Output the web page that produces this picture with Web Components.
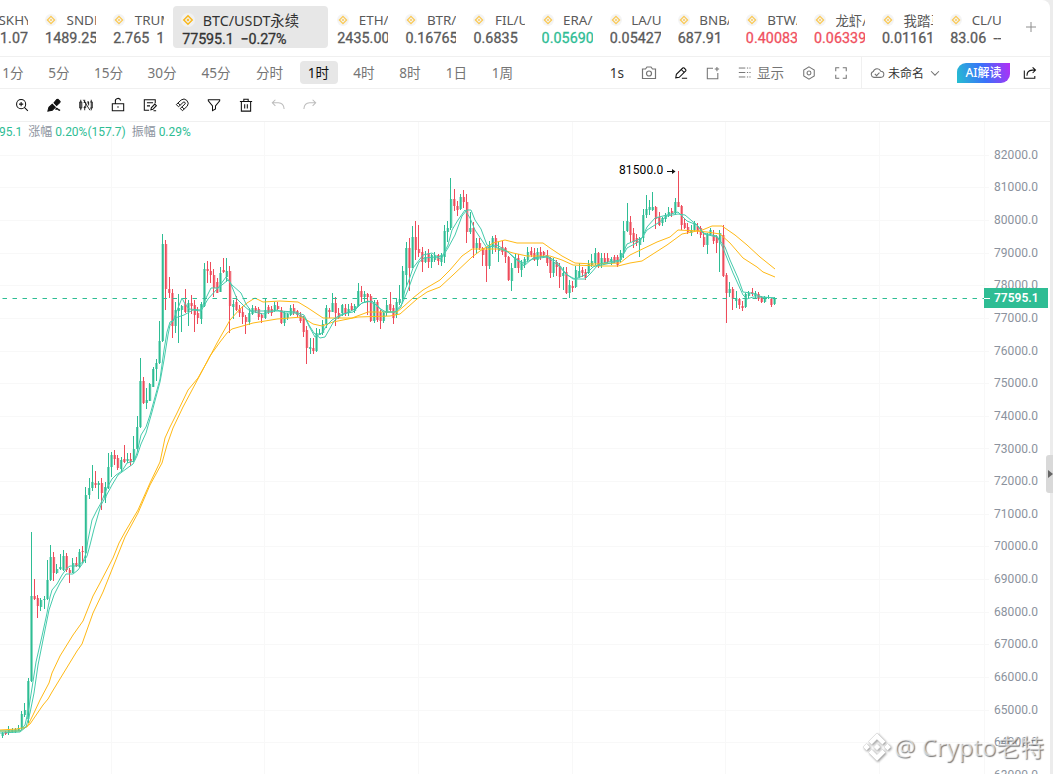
<!DOCTYPE html>
<html lang="zh">
<head>
<meta charset="utf-8">
<title>BTC/USDT</title>
<style>
  body {
    margin: 0;
    width: 1053px;
    height: 774px;
    overflow: hidden;
    background: #ececec;
    font-family: "Noto Sans", "Noto Sans CJK SC", sans-serif;
  }
</style>
</head>
<body>
<trade-app></trade-app>

<script>
class TickerItem extends HTMLElement {
  constructor() {
    super();
    this.attachShadow({ mode: 'open' });
  }

  connectedCallback() {
    this.shadowRoot.innerHTML = `
    <style>
      :host {
        display: block;
        flex: none;
        width: 51.1px;
        height: 42px;
        margin: 6px 17px 0 0;
        overflow: hidden;
        white-space: nowrap;
        color: #5a5a5a;
        font-size: 13.4px;
      }
      .name {
        display: flex;
        align-items: center;
        height: 17px;
        margin-top: 5px;
      }
      svg {
        flex: none;
        width: 12px;
        height: 12px;
        margin-right: 9.5px;
        opacity: .75;
      }
      .price {
        display: block;
        font: 400 14.3px/18px Roboto, "Noto Sans CJK SC", sans-serif;
        -webkit-text-stroke: .3px currentColor;
        height: 18px;
        margin-top: 1px;
        letter-spacing: .05px;
      }
      :host([up]) .price { color: #2ebd94; }
      :host([down]) .price { color: #f0505e; }
      :host([cut]) { margin-left: -23px; }
      :host([cut]) .price { text-align: right; }
      :host([active]) {
        box-sizing: border-box;
        width: 155px;
        margin: 6px 9px 0 -8px;
        padding: 0 9px;
        border-radius: 4px;
        background: #e7e7e7;
        color: #333;
        font-size: 14.3px;
      }
      :host([active]) svg { opacity: 1; width: 14px; height: 14px; margin: 0 7.5px 0 -1px; }
      :host([active]) .price { margin-top: 2px; letter-spacing: -.1px; }
    </style>
    <span class="name">
      <svg viewBox="0 0 14 14">
        <circle cx="7" cy="7" r="7" fill="#f1f1f1"/>
        <path d="M7 2.800 11.200 7 7 11.200 2.800 7Z" fill="none" stroke="#f9b81e" stroke-width="1.500"/>
        <path d="M7 5.500 8.500 7 7 8.500 5.500 7Z" fill="#f9b81e"/>
      </svg><slot></slot>
    </span>
    <span class="price"><slot name="price"></slot></span>`;
  }
}
customElements.define('ticker-item', TickerItem);

class TickerBar extends HTMLElement {
  constructor() {
    super();
    this.attachShadow({ mode: 'open' }).innerHTML = `
    <style>
      :host {
        display: flex;
        height: 56px;
        border-bottom: 1px solid #f0f0f0;
        overflow: hidden;
      }
      .add {
        flex: none;
        width: 12px;
        margin: 21px 0 0 7px;
      }
    </style>
    <slot></slot>
    <svg class="add" height="12" viewBox="0 0 12 12"><path d="M6 1v10M1 6h10" stroke="#8e8e8e"/></svg>`;
  }
}
customElements.define('ticker-bar', TickerBar);

const ICONS = {
  camera: '<path d="M1.5 4h3L6 2h4l1.500 2h3v9.500h-13z"/><circle cx="8" cy="8.500" r="2.500"/>',
  pencil: '<path d="M2 13.500l.7-4L10 2.300q.8-.6 1.600 0l1.800 1.800q.7.8 0 1.600L6 13l-4 .5zM8.300 4l3.500 3.500M9 14h6"/>',
  addbox: '<path d="M8 2.500H1.500v12h12V8M12.500 1v5M10 3.500h5"/>',
  list: '<path d="M1 2.500h8M1 8h8M1 13.500h8M11 2.500h1.500M14 2.500h1.500M11 8h1.500M14 8h1.500M11 13.500h1.500M14 13.500h1.500"/>',
  hexagon: '<path d="M8 1l6 3.500v7L8 15l-6-3.500v-7z"/><circle cx="8" cy="8" r="2.200"/>',
  full: '<path d="M2 6V2h4M10 2h4v4M14 10v4h-4M6 14H2v-4"/>',
  cloud: '<path d="M4.500 13a3.400 3.400 0 0 1-.7-6.600A4.500 4.500 0 0 1 12.300 6a3.500 3.500 0 0 1 0 7zM5.500 9l2 2 3.300-3.500"/>',
  chevron: '<path d="M3.500 6L8 10.500 12.500 6"/>',
  share: '<path d="M1.500 5v9h12v-2.500M4.500 11q0-6 6-6.300h3M11 1.500l3.300 3.200L11 8"/>',
  zoom: '<circle cx="7" cy="7" r="5.200"/><path d="M7 4.600v4.800M4.600 7h4.800M10.700 10.700l4 4"/>',
  brush: '<path d="M1 15l1.200-4.500L6 7l3.500 3.500L6 14z" fill="currentColor"/><path d="M8 5.500l3.200-3.700 1.300-.3 2.500 2.500-.3 1.200L11 8.500z" fill="currentColor"/><path d="M10 13.500q1-2.500 2-1t3 1.500" stroke-width="1.600"/>',
  candles: '<path d="M2 2v12M.8 4.500h2.400v7H.8zM6.500 2v3M6.500 9v5M5.300 5h2.400v6H5.300M14 2v12M12.800 4.500h2.400v7h-2.400M10.500 4v3M5 2l7.500 12M9.500 4.500H11v4" stroke-width="1"/>',
  lock: '<path d="M1.500 6.500h13v8h-13zM5 6.500V4a3 3 0 0 1 6-1"/><path d="M8 9.500v1.500"/>',
  note: '<path d="M14 6V2H1.500v12H7M4.500 5.500h7M4.500 9H8M9 13.500l.5-2.300L13.500 7l1.800 1.800-4 4.200zM12 14.500h3"/>',
  magnet: '<path d="M1.500 7.500L7 2.300a5 5 0 0 1 7 7L8.500 14.500 6 12l5.300-5a1.400 1.400 0 0 0-2-2L4 10zM3.500 5.700L6 8.200M8 10.200l2.500 2.500" stroke-width="1.100"/>',
  funnel: '<path d="M1.500 2h13v1.200L9.700 9v3.500L6.300 14.500V9L1.500 3.200z"/>',
  trash: '<path d="M1 4h14M5.500 4V1.500h5V4M2.700 4v11h10.600V4M6.500 7v5M9.500 7v5"/>',
  undo: '<path d="M5 2L1.500 5.500 5 9M1.500 5.500h7q6 .3 6.500 7"/>',
  redo: '<path d="M11 2l3.500 3.500L11 9M14.500 5.500h-7q-6 .3-6.500 7"/>',
};

class ToolIcon extends HTMLElement {
  constructor() {
    super();
    this.attachShadow({ mode: 'open' });
  }

  connectedCallback() {
    const size = this.getAttribute('size') || 14;
    this.shadowRoot.innerHTML = `
    <style>
      :host {
        display: inline-flex;
        justify-content: center;
        align-items: center;
        flex: none;
        color: #111;
      }
      :host([soft]) { color: #747474; }
      :host([off]) { color: #bdbdbd; }
      :host([cell]) { width: 32px; }
      svg { fill: none; stroke: currentColor; stroke-width: 1.2; overflow: visible; }
    </style>
    <svg width="${size}" height="${size}" viewBox="0 0 16 16">${ICONS[this.getAttribute('name')]}</svg>`;
  }
}
customElements.define('tool-icon', ToolIcon);

class IntervalTab extends HTMLElement {
  constructor() {
    super();
    this.attachShadow({ mode: 'open' });
  }

  connectedCallback() {
    this.shadowRoot.innerHTML = `
    <style>
      :host {
        display: flex;
        flex: none;
        justify-content: center;
        width: ${this.getAttribute('w')}px;
        color: #757575;
        font-size: 13.6px;
      }
      span { line-height: 23px; border-radius: 4px; text-align: center; }
      :host([active]) span { width: 38px; background: #e7e7e7; color: #111; }
    </style>
    <span><slot></slot></span>`;
  }
}
customElements.define('interval-tab', IntervalTab);

class ToolRow extends HTMLElement {
  constructor() {
    super();
    this.attachShadow({ mode: 'open' }).innerHTML = `
    <style>
      :host {
        display: flex;
        align-items: center;
        box-sizing: border-box;
        height: 32px;
        border-bottom: 1px solid #f0f0f0;
        overflow: hidden;
      }
      :host([draw]) { height: 33px; padding-left: 6px; }
    </style>
    <slot></slot>`;
  }
}
customElements.define('tool-row', ToolRow);

// one candle per entry: direction, high, low, body top, body bottom (y in px)
const CANDLES = `
g732,738,733,736 r731,735,732,734 g726,735,730,733 g728,733,730,732 g728,733,729,732 g725,731,728,731 g711,730,714,728 g703,717,710,715 g678,723,681,719
g532,682,596,681 r579,600,596,599 r595,618,598,606 g598,611,600,607 g596,609,599,600 g560,600,580,599 g545,581,557,580 r552,581,557,573 g564,574,569,573
g554,570,567,569 g550,571,556,570 r553,572,556,570 r568,583,570,573 g558,573,563,573 r557,567,563,566 g549,568,552,567 r546,563,551,552 g487,563,495,553
g478,499,488,495 g465,491,482,488 r471,488,483,485 g481,499,483,485 r478,510,483,493 g482,503,487,498 g453,489,467,488 g452,477,455,467 r450,465,455,459
r455,470,458,468 g457,472,460,469 r445,463,459,462 g453,463,459,461 r453,466,459,462 g436,462,449,460 g416,451,427,449 g358,428,381,427 r377,404,381,403
g388,409,400,403 g383,401,384,401 g367,387,369,387 g359,381,363,369 g321,364,341,363 g234,342,244,341 r240,310,244,289 r277,298,289,293 r289,338,293,326
g302,333,310,326 g294,343,308,311 g305,332,306,310 r289,313,304,312 g300,326,303,312 r295,314,303,306 r300,332,305,315 r307,324,313,318 g302,324,304,319
g263,307,269,306 r261,283,269,271 r262,283,271,275 r269,297,275,288 r278,293,282,293 g267,292,273,292 r258,273,270,272 g258,282,271,277 r266,333,271,306
g300,319,304,307 r296,311,302,310 r305,317,309,313 r306,324,312,317 r315,334,317,322 g308,325,313,322 g305,315,308,314 r306,313,308,311 r307,320,309,317
r313,323,315,318 g298,319,310,318 r305,314,307,312 r306,316,309,313 g302,312,305,311 r302,310,306,309 r307,324,310,323 g311,326,313,323 g313,320,314,318
g305,316,308,315 r304,315,308,313 r310,317,311,315 r312,323,315,321 r316,337,318,332 r326,364,330,348 g338,354,347,349 r338,354,348,351 g328,352,333,351
g329,335,333,335 g320,335,324,333 g305,328,308,324 r308,318,310,312 g293,312,303,312 r297,326,303,313 r308,319,313,318 g304,316,305,313 r304,316,308,313
g304,316,309,313 r303,311,306,310 g304,313,306,311 g283,307,291,306 r286,302,291,297 g291,303,294,297 r293,315,294,297 r294,322,296,321 g300,323,302,321
r300,322,302,320 r310,329,312,321 g312,323,313,321 g300,316,305,313 r292,312,304,310 r305,324,308,318 g299,318,302,315 g285,305,299,303 g266,302,271,298
g242,287,248,275 r238,291,248,268 g226,268,237,268 r221,260,237,250 r225,257,249,253 r247,272,252,262 g251,263,257,262 r249,268,253,262 g254,268,255,262
g252,262,256,260 r254,265,255,261 g253,266,255,262 g225,263,231,257 g221,242,228,232 g178,230,199,228 r189,211,199,206 r201,216,206,210 g194,210,197,209
r190,208,197,202 r194,243,202,232 g212,234,228,232 r222,258,228,248 g238,254,243,248 r238,250,243,248 r247,266,248,255 r247,282,250,266 g241,269,246,266
g236,254,238,247 r235,252,238,247 g242,262,248,251 r241,255,247,252 r247,263,248,257 r256,281,257,280 g263,291,268,281 g254,268,258,268 r254,273,258,268
g260,277,263,270 g257,268,259,265 g247,261,252,260 r247,257,251,255 r248,261,253,260 g248,266,252,260 r247,260,252,257 r251,257,252,255 r250,266,255,263
r257,278,258,273 g258,277,262,273 r260,276,262,267 r263,288,266,277 g267,290,273,276 r267,294,272,293 g280,298,285,293 r281,292,286,288 g266,288,270,287
g263,278,271,277 r267,277,270,273 r269,280,272,278 g260,274,264,273 g254,267,261,265 g248,265,253,263 r252,268,253,265 g253,268,258,264 r253,263,258,262
r253,264,258,262 g257,265,259,262 r255,263,257,262 r255,267,257,265 g250,262,253,260 g221,258,231,252 g203,232,221,231 r216,242,222,235 r228,248,233,242
r234,246,238,243 g237,257,238,245 g209,242,215,238 g195,218,209,215 g200,215,207,210 g192,211,207,210 r206,229,207,219 r212,226,217,225 g217,226,218,223
g213,222,215,219 g207,217,212,215 r208,217,211,214 g198,215,202,213 r171,207,202,207 r205,230,206,225 r219,229,223,228 r223,234,227,232 g225,236,230,233
g221,232,223,230 r223,234,226,231 r226,238,228,235 r232,247,237,245 g233,254,235,245 g228,236,230,234 r230,244,235,241 r235,253,237,243 g230,272,233,242
r225,277,235,276 r273,323,275,293 g282,297,289,293 r287,310,289,299 g291,308,298,301 r298,309,299,305 r301,311,306,308 g293,308,294,307 g291,298,293,296
r288,296,292,294 g291,298,293,296 r292,301,294,299 r296,303,297,302 g296,303,297,302 g295,299,297,298 r298,307,299,305 g297,305,298,304
`.trim().split(/\s+/);

const AVERAGES = [
  ['#ffb915', '0,730 17,729 27,727 33,715 40,700 49,683 52,673 60,656 73,635 83,621 93,596 100,583 113,558 119,543 125,532 138,510 150,483 160,462 165,438 170,427 177,413 188,390 198,378 207,362 217,343 230,320 240,309 247,303 255,298 263,302 280,301 298,302 308,308 323,318 352,318 368,312 397,312 403,307 413,298 423,290 440,280 450,270 462,256 472,249 500,249 513,253 527,256 550,256 562,260 573,265 600,266 618,266 630,263 642,261 667,245 682,234 697,231 707,232 720,234 730,243 743,258 757,267 763,272 775,277'],
  ['#ffb915', '0,731 20,731 30,724 43,705 48,699 52,692 77,651 82,644 93,613 103,592 117,557 125,537 138,513 150,485 162,463 167,445 173,428 183,407 200,375 210,356 220,342 227,333 232,329 253,323 277,319 302,317 313,324 322,326 333,322 358,317 390,316 400,314 417,299 427,292 440,287 453,275 472,257 480,251 493,243 505,240 517,243 543,243 550,248 562,256 575,263 593,264 620,263 630,255 657,242 670,237 678,230 700,231 712,226 722,226 735,235 747,245 760,257 775,269'],
  ['#45cbac', '0,731 20,731 25,725 29,707 32,688 36,662 42,636 47,613 50,597 52,590 57,584 62,575 67,568 70,566 77,566 83,562 86,553 88,540 92,520 97,510 101,503 107,488 112,479 116,475 122,471 127,463 134,461 137,453 141,435 146,427 150,415 155,397 160,379 164,350 167,332 170,322 173,321 176,313 182,298 185,304 189,309 201,310 205,300 211,288 218,288 226,277 230,282 237,299 244,306 250,311 263,314 277,310 285,313 295,313 305,318 310,328 315,337 322,333 327,325 332,320 342,314 353,312 362,303 368,301 377,305 383,312 395,312 401,307 405,290 409,280 413,268 423,255 432,253 438,257 443,255 448,245 452,230 458,220 465,210 470,218 475,230 487,248 497,245 508,252 515,258 524,266 533,258 547,256 557,262 567,275 575,279 585,275 593,267 603,263 620,260 627,244 637,240 642,238 647,227 655,218 667,215 678,212 687,221 697,225 703,233 717,236 723,248 733,273 743,295 747,299 753,297 760,297 775,298'],
  ['#45cbac', '0,733 20,732 26,727 30,713 34,693 38,665 43,640 49,610 54,595 60,583 66,574 73,574 78,570 83,563 87,556 90,545 94,529 98,515 101,505 105,498 112,485 118,475 126,469 133,464 137,456 141,444 146,433 152,412 160,382 164,360 168,335 170,325 175,318 184,315 193,310 201,311 208,299 217,289 228,280 232,285 241,293 246,304 251,311 265,311 280,311 295,312 304,315 309,325 314,333 320,338 325,337 329,330 334,321 340,316 353,310 362,303 372,301 379,308 386,312 395,312 402,304 408,290 413,276 419,262 424,258 436,257 441,259 448,248 455,235 462,216 467,210 471,210 475,220 481,229 487,245 498,248 508,252 515,259 524,263 533,259 547,257 558,265 565,273 573,279 585,279 591,273 597,266 620,261 627,248 640,241 647,230 658,223 667,216 678,214 685,215 692,221 698,226 704,234 717,237 725,247 730,260 738,278 743,292 751,293 757,295 762,297 775,298'],
];

class CandleChart extends HTMLElement {
  constructor() {
    super();
    this.attachShadow({ mode: 'open' });
  }

  connectedCallback() {
    const top = 122;
    let grid = '';
    for (let i = 0; i < 19; i++) {
      const y = Math.round(154.55 + i * 32.66) + 0.5;
      grid += `<path d="M0 ${y}H989"/>`;
    }
    [111, 264, 418, 572, 725, 879, 984].forEach(x => {
      grid += `<path d="M${x + 0.5} 122V774"/>`;
    });

    let candles = '';
    CANDLES.forEach((item, i) => {
      const color = item[0] === 'g' ? '#2ebd94' : '#ee4b5a';
      const [high, low, open, close] = item.slice(1).split(',').map(Number);
      const x = 2.67 + i * 3.203;
      candles += `<rect x="${(x - 1.2).toFixed(2)}" y="${open}" width="2.4" height="${Math.max(1, close - open)}" fill="${color}" opacity=".8"/>`;
      candles += `<rect x="${Math.floor(x - 0.15)}" y="${high}" width="1" height="${low - high}" fill="${color}"/>`;
    });

    const lines = AVERAGES.map(([color, points]) =>
      `<polyline points="${points}" fill="none" stroke="${color}" stroke-width="1" stroke-linejoin="round"/>`).join('');

    let labels = '';
    for (let price = 82000; price >= 63000; price -= 1000) {
      labels += `<span>${price}.0</span>`;
    }

    this.shadowRoot.innerHTML = `
    <style>
      :host {
        display: grid;
        grid-template-columns: 984px 1fr;
        position: relative;
        height: 652px;
        overflow: hidden;
        font-family: Roboto, "Noto Sans CJK SC", sans-serif;
        font-size: 12px;
      }
      svg { position: absolute; left: 0; top: 0; }
      .legend {
        position: relative;
        height: 20px;
        margin-left: -1px;
        line-height: 20px;
        color: #8d94a0;
        white-space: nowrap;
        letter-spacing: -.01px;
      }
      .legend b { font-weight: 400; color: #2ebd94; }
      .axis {
        position: relative;
        display: flex;
        flex-direction: column;
        padding: 16.6px 0 0 10px;
        color: #8b929d;
        letter-spacing: .05px;
      }
      .axis span { flex: none; height: 32.66px; line-height: 33px; }
      .last {
        position: absolute;
        left: 984px;
        top: 166px;
        width: 64px;
        height: 20px;
        box-sizing: border-box;
        padding-left: 10px;
        background: #2ebd94;
        color: #fff;
        font-weight: 600;
        line-height: 20px;
        letter-spacing: 0;
      }
      .last::before {
        content: "";
        position: absolute;
        left: 0;
        top: 10px;
        width: 6px;
        height: 1px;
        background: #fff;
      }
      .peak {
        position: absolute;
        left: 619px;
        top: 40px;
        line-height: 16px;
        color: #000;
        letter-spacing: .1px;
      }
    </style>
    <svg width="1050" height="652" viewBox="0 ${top} 1050 652">
      <g stroke="#f8f8f8">${grid}</g>
      ${candles}
      ${lines}
      <path d="M2.500 298.500H984" stroke="#2ebd94" stroke-dasharray="4.500 5.500"/>
      <path d="M667 171.500h7" stroke="#111"/>
      <path d="M672 169l3.500 2.500-3.500 2.500z" fill="#111"/>
    </svg>
    <div class="legend"><b>95.1</b>&nbsp; 涨幅 <b>0.20%(157.7)</b>&nbsp; 振幅 <b>0.29%</b></div>
    <div class="axis">${labels}</div>
    <div class="last">77595.1</div>
    <div class="peak">81500.0</div>`;
  }
}
customElements.define('candle-chart', CandleChart);

class WaterMark extends HTMLElement {
  constructor() {
    super();
    this.attachShadow({ mode: 'open' }).innerHTML = `
    <style>
      :host {
        display: flex;
        align-items: center;
        position: absolute;
        left: 863px;
        top: 731px;
        height: 34px;
        white-space: nowrap;
        font-size: 23.8px;
        color: rgba(255, 255, 255, .6);
        text-shadow: 1px 1px 1px rgba(100, 100, 100, .85);
      }
      span { margin-top: -5px; }
      svg { width: 28px; height: 30px; margin: -2px 3px 0 0; filter: drop-shadow(1px 1px 1px #999); }
    </style>
    <svg viewBox="0 0 28 30" fill="#fff" stroke="#ccc" stroke-width=".5">
      <path d="M14 1l8.500 8.500-3.200 3.200L14 7.400l-5.300 5.300-3.200-3.200zM14 29l-8.500-8.500 3.200-3.200L14 22.600l5.300-5.300 3.200 3.200zM3.500 11.500L7 15l-3.500 3.500L0 15zM24.500 11.500L28 15l-3.500 3.500L21 15zM14 11.500l3.500 3.500-3.500 3.500-3.500-3.500z"/>
    </svg>
    <span><slot></slot></span>`;
  }
}
customElements.define('water-mark', WaterMark);

class TradeApp extends HTMLElement {
  constructor() {
    super();
    this.attachShadow({ mode: 'open' });
  }

  connectedCallback() {
    const tickers = [
      ['SKHY/', '1.07', 'cut'], ['SNDK/', '1489.25', ''], ['TRUMP', '2.765&nbsp; 1.2', ''],
      ['BTC/USDT永续', '77595.1&nbsp; −0.27%', 'active'],
      ['ETH/U', '2435.00', ''], ['BTR/U', '0.16765', ''], ['FIL/US', '0.6835&nbsp; −1', ''],
      ['ERA/U', '0.05690', 'up'], ['LA/US', '0.05427', ''], ['BNB/U', '687.91&nbsp; −', ''],
      ['BTW/', '0.40083', 'down'], ['龙虾/U', '0.06339', 'down'], ['我踏马', '0.01161', ''],
      ['CL/US', '83.06&nbsp; --', ''],
    ];
    const intervals = [
      ['1分', 46], ['5分', 46], ['15分', 53], ['30分', 54], ['45分', 54], ['分时', 53],
      ['1时', 45, 'active'], ['4时', 46], ['8时', 46], ['1日', 47], ['1周', 45],
    ];
    const tools = ['zoom', 'brush', 'candles', 'lock', 'note', 'magnet', 'funnel', 'trash'];

    this.shadowRoot.innerHTML = `
    <style>
      :host {
        display: block;
        position: relative;
        width: 1050px;
        height: 774px;
        background: #fff;
        border-radius: 0 8px 0 0;
      }
      .intervals { display: flex; margin-left: -10px; width: 611px; }
      .speed { width: 32px; text-align: center; font-size: 13.6px; color: #333; }
      .display {
        display: flex;
        align-items: center;
        gap: 6px;
        width: 55px;
        padding-left: 9px;
        font-size: 13.6px;
        line-height: 20px;
        color: #747474;
      }
      .name {
        display: flex;
        align-items: center;
        gap: 4px;
        height: 32px;
        width: 86px;
        margin-left: 4px;
        padding-left: 8px;
        border-left: 1px solid #f0f0f0;
        font-size: 12px;
        color: #333;
      }
      .ai {
        width: 53px;
        height: 20px;
        border-radius: 9px 0 9px 0;
        background: linear-gradient(75deg, #25bfd0, #3a70fa 50%, #b52df5);
        color: #fff;
        font-size: 12px;
        font-weight: 500;
        line-height: 20px;
        text-align: center;
        margin: 0 13px 0 1px;
      }
      .handle {
        position: absolute;
        left: 1046px;
        top: 455px;
        width: 7px;
        height: 38px;
        border-radius: 3px 0 0 3px;
        background: #d9d9d9;
      }
      .handle svg { display: block; margin: 15px 0 0 2px; }
    </style>
    <ticker-bar>
      ${tickers.map(([name, price, state]) => `<ticker-item ${state}>${name}<span slot="price">${price}</span></ticker-item>`).join('')}
    </ticker-bar>
    <tool-row>
      <div class="intervals">
        ${intervals.map(([label, w, state]) => `<interval-tab w="${w}" ${state || ''}>${label}</interval-tab>`).join('')}
      </div>
      <span class="speed">1s</span>
      <tool-icon cell soft name="camera" size="16"></tool-icon>
      <tool-icon cell name="pencil"></tool-icon>
      <tool-icon cell soft name="addbox"></tool-icon>
      <span class="display"><tool-icon soft name="list" size="13"></tool-icon>显示</span>
      <tool-icon cell soft name="hexagon"></tool-icon>
      <tool-icon cell soft name="full"></tool-icon>
      <span class="name">
        <tool-icon soft name="cloud"></tool-icon>未命名
        <tool-icon soft name="chevron"></tool-icon>
      </span>
      <span class="ai">AI解读</span>
      <tool-icon name="share"></tool-icon>
    </tool-row>
    <tool-row draw>
      ${tools.map(name => `<tool-icon cell name="${name}"></tool-icon>`).join('')}
      <tool-icon cell off name="undo"></tool-icon>
      <tool-icon cell off name="redo"></tool-icon>
    </tool-row>
    <candle-chart></candle-chart>
    <div class="handle">
      <svg width="5" height="8"><path d="M0 0l5 4-5 4z" fill="#666"/></svg>
    </div>
    <water-mark>@ Crypto老特</water-mark>`;
  }
}
customElements.define('trade-app', TradeApp);
</script>
</body>
</html>
